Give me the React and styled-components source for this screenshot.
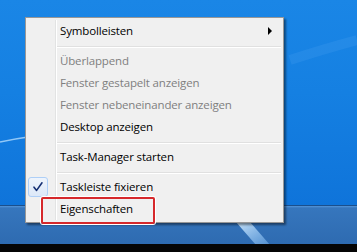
import React from "react";
import styled, { createGlobalStyle } from "styled-components";

const Global = createGlobalStyle`
  html, body { margin: 0; padding: 0; }
  body { width: 357px; height: 252px; overflow: hidden; font-family: "Open Sans", "Noto Sans", sans-serif; }
`;

const Desktop = styled.div`
  position: relative;
  width: 357px;
  height: 252px;
  display: flex;
  flex-direction: column;
  overflow: hidden;
`;

const Wallpaper = styled.div`
  flex: 0 0 205px;
  background: linear-gradient(180deg, #1a86e6 0%, #1580e2 45%, #0f74da 100%);
  position: relative;
`;

const Streaks = styled.svg`
  position: absolute;
  inset: 0;
`;

const Taskbar = styled.div`
  flex: 0 0 39px;
  background: linear-gradient(180deg, #5595d8 0px, #3676bd 2px, #2e6bb1 100%);
  border-top: 1px solid #1b4f8c;
  box-sizing: border-box;
  position: relative;
  overflow: hidden;
`;

const Beam = styled.svg`
  position: absolute;
  inset: 0;
`;

const BlackStrip = styled.div`
  flex: 0 0 8px;
  background: #050505;
`;

const Menu = styled.div`
  position: absolute;
  left: 25px;
  top: 17px;
  width: 259px;
  box-sizing: border-box;
  background: #f0f0f0;
  border: 1px solid #979797;
  padding: 2px;
  box-shadow: 2px 2px 2px rgba(0, 0, 0, 0.45);
  display: flex;
  flex-direction: column;
  font-family: "Open Sans", "Noto Sans", sans-serif;
  font-size: 11.5px;
  letter-spacing: -0.15px;
  &::before {
    content: "";
    position: absolute;
    left: 29px;
    top: 2px;
    bottom: 2px;
    width: 1px;
    background: #e2e3e3;
    box-shadow: 1px 0 0 #ffffff;
  }
`;

const Item = styled.div`
  position: relative;
  height: 22px;
  line-height: 22px;
  padding-left: 32px;
  padding-right: 9px;
  color: ${(p) => (p.$disabled ? "#7f7f7f" : "#000000")};
  display: flex;
  align-items: center;
  justify-content: space-between;
  white-space: nowrap;
`;

const Arrow = styled.span`
  width: 0;
  height: 0;
  border-left: 4px solid #000;
  border-top: 4px solid transparent;
  border-bottom: 4px solid transparent;
`;

const CheckBox = styled.span`
  position: absolute;
  left: 0;
  top: 1px;
  width: 20px;
  height: 20px;
  box-sizing: border-box;
  border: 1px solid #aecff7;
  border-radius: 3px;
  background: linear-gradient(180deg, #eef4fc 0%, #dce8f8 100%);
  display: flex;
  align-items: center;
  justify-content: center;
`;

const Separator = styled.div`
  height: 8px;
  margin-left: 28px;
  display: flex;
  align-items: center;
  &::after {
    content: "";
    display: block;
    width: 100%;
    height: 1px;
    background: #e0e0e0;
    box-shadow: 0 1px 0 #ffffff;
  }
`;

const Highlight = styled.div`
  position: absolute;
  left: 41px;
  top: 197px;
  width: 114px;
  height: 27px;
  box-sizing: border-box;
  border: 2px solid #d6282b;
  border-radius: 2px;
  box-shadow: 0 0 0 1px #ffffff;
  pointer-events: none;
`;

export default function App() {
  return (
    <>
      <Global />
      <Desktop>
        <Wallpaper>
          <Streaks width="357" height="205" viewBox="0 0 357 205">
            <path d="M0 142 Q14 139 28 137" stroke="rgba(190,225,255,0.75)" strokeWidth="1.5" fill="none" />
            <path d="M290 60 Q320 50 357 40" stroke="rgba(120,190,255,0.12)" strokeWidth="10" fill="none" />
          </Streaks>
        </Wallpaper>
        <Taskbar>
          <Beam width="357" height="39" viewBox="0 0 357 39">
            <defs>
              <linearGradient id="bm" x1="0" y1="0" x2="1" y2="1">
                <stop offset="0" stopColor="rgba(220,240,255,0.9)" />
                <stop offset="1" stopColor="rgba(140,200,255,0.4)" />
              </linearGradient>
            </defs>
            <polygon points="236,16 250,16 270,39 256,39" fill="url(#bm)" />
          </Beam>
        </Taskbar>
        <BlackStrip />
        <Menu>
          <Item>
            Symbolleisten
            <Arrow />
          </Item>
          <Separator />
          <Item $disabled>Überlappend</Item>
          <Item $disabled>Fenster gestapelt anzeigen</Item>
          <Item $disabled>Fenster nebeneinander anzeigen</Item>
          <Item>Desktop anzeigen</Item>
          <Separator />
          <Item>Task-Manager starten</Item>
          <Separator />
          <Item>
            <CheckBox>
              <svg width="12" height="12" viewBox="0 0 12 12">
                <path d="M2 6.2 L4.6 9.4 L10 1.8" stroke="#142f73" strokeWidth="1.6" fill="none" strokeLinecap="round" strokeLinejoin="round" />
              </svg>
            </CheckBox>
            Taskleiste fixieren
          </Item>
          <Item>Eigenschaften</Item>
        </Menu>
        <Highlight />
      </Desktop>
    </>
  );
}
